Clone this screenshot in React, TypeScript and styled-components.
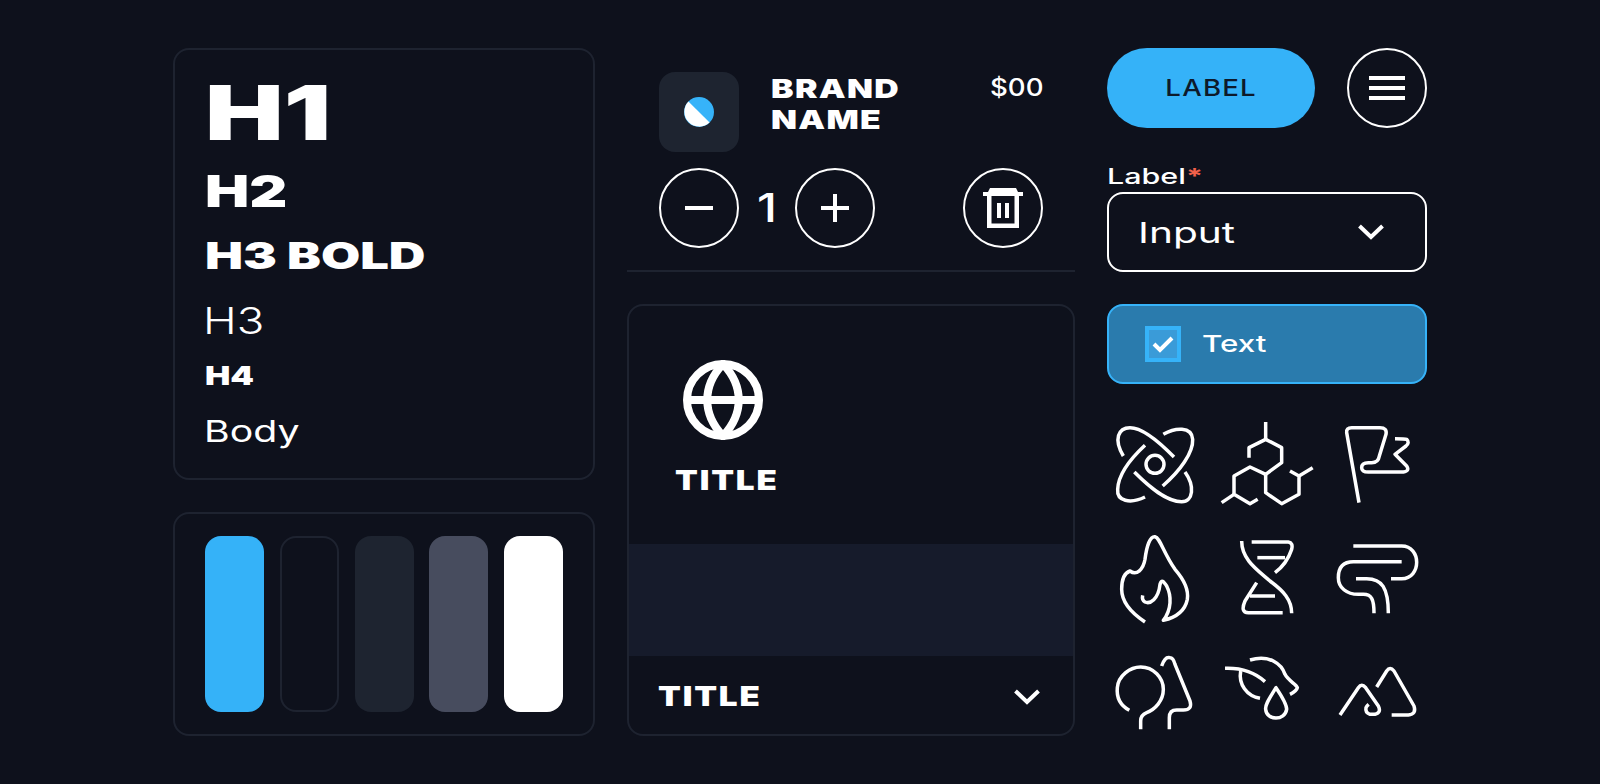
import styled, { createGlobalStyle, css } from "styled-components";

const GlobalStyle = createGlobalStyle`
  html, body {
    margin: 0;
    padding: 0;
    background: #0e111c;
    color: #fff;
    font-family: Inter, "Liberation Sans", sans-serif;
  }
`;

// no wide grotesque is installed, so text gets stretched sideways
const wide = (sx: number, origin = "left") => css`
  display: block;
  white-space: nowrap;
  transform: scaleX(${sx});
  transform-origin: ${origin} center;
`;

const Page = styled.div`
  display: grid;
  grid-template-columns: 422px 448px 320px;
  column-gap: 32px;
  width: 1254px;
  height: 784px;
  margin: 0 auto;
  padding-top: 48px;
  box-sizing: border-box;
`;

const Column = styled.div`
  display: flex;
  flex-direction: column;
  gap: 32px;
`;

const Panel = styled.section`
  border: 2px solid #1e2330;
  border-radius: 16px;
  box-sizing: border-box;
`;

const TypePanel = styled(Panel)`
  height: 432px;
  padding: 24px 0 0 30px;
`;

const H1 = styled.div`
  ${wide(1.38)}
  font-size: 76px;
  line-height: 76px;
  font-weight: 900;
`;
const H2 = styled.div`
  ${wide(1.34)}
  font-size: 44px;
  line-height: 44px;
  font-weight: 900;
  margin-top: 19px;
`;
const H3Bold = styled.div`
  ${wide(1.37)}
  font-size: 37px;
  line-height: 40px;
  font-weight: 900;
  margin-top: 23px;
`;
const H3 = styled.div`
  ${wide(1.23)}
  font-size: 37px;
  line-height: 40px;
  font-weight: 300;
  margin: 25px 0 0 -2px;
`;
const H4 = styled.div`
  ${wide(1.3)}
  font-size: 26px;
  line-height: 26px;
  font-weight: 900;
  margin-top: 22px;
`;
const Body = styled.div`
  ${wide(1.31)}
  font-size: 30px;
  line-height: 30px;
  font-weight: 400;
  margin: 27px 0 0 -1px;
`;

const PalettePanel = styled(Panel)`
  display: flex;
  justify-content: space-between;
  height: 224px;
  padding: 22px 30px;
`;

const Swatch = styled.div<{ $fill: string; $line?: string }>`
  width: 59px;
  border-radius: 16px;
  box-sizing: border-box;
  background: ${(p) => p.$fill};
  border: ${(p) => (p.$line ? `2px solid ${p.$line}` : "none")};
`;

const Cart = styled.div`
  height: 224px;
  padding: 24px 32px 0;
  box-sizing: border-box;
  border-bottom: 2px solid #1e2330;
`;

const CartRow = styled.div`
  display: flex;
  align-items: flex-start;
  margin-bottom: 16px;
`;

const Thumb = styled.div`
  display: flex;
  align-items: center;
  justify-content: center;
  width: 80px;
  height: 80px;
  border-radius: 16px;
  background: #1e2430;
`;

const BrandName = styled.div`
  ${wide(1.3)}
  margin: 1px 0 0 32px;
  font-size: 26px;
  line-height: 31px;
  font-weight: 900;
  letter-spacing: 1px;
`;

const Price = styled.div`
  ${wide(1.15, "right")}
  margin: 0 0 0 auto;
  font-size: 24px;
  line-height: 31px;
  font-weight: 500;
`;

const RoundButton = styled.button<{ $push?: boolean }>`
  display: flex;
  align-items: center;
  justify-content: center;
  flex: none;
  width: 80px;
  height: 80px;
  padding: 0;
  margin-left: ${(p) => (p.$push ? "auto" : "0")};
  background: transparent;
  color: #fff;
  border: 2px solid #fff;
  border-radius: 50%;
`;

const Quantity = styled.div`
  width: 56px;
  text-align: center;
  font-size: 40px;
  line-height: 80px;
  font-weight: 500;
  transform: scaleX(1.2);
`;

const InfoCard = styled(Panel)`
  display: flex;
  flex-direction: column;
  height: 432px;
  overflow: hidden;
`;

const Feature = styled.div`
  display: flex;
  flex-direction: column;
  align-items: flex-start;
  height: 238px;
  padding: 54px 0 0 46px;
  box-sizing: border-box;
`;

const GlobeSlot = styled.div`
  margin-left: 8px;
`;

const Title = styled.div`
  ${wide(1.23)}
  font-size: 27px;
  line-height: 30px;
  font-weight: 900;
  letter-spacing: 1.5px;
`;

const FeatureTitle = styled(Title)`
  margin-top: 26px;
`;

const Band = styled.div`
  height: 112px;
  background: #161b2b;
`;

const Accordion = styled.div`
  display: flex;
  flex: 1;
  align-items: center;
  justify-content: space-between;
  padding: 3px 33px 0 29px;
`;

const TopRow = styled.div`
  display: flex;
  justify-content: space-between;
`;

const PrimaryButton = styled.button`
  width: 208px;
  height: 80px;
  padding: 0;
  border: 0;
  border-radius: 40px;
  background: #35b2f8;
  color: #0d1a2b;
  font-family: inherit;
  font-size: 23px;
  font-weight: 500;
  letter-spacing: 1px;
`;

const ButtonText = styled.span`
  display: inline-block;
  transform: scaleX(1.2);
`;

const Field = styled.div`
  margin-top: 32px;
`;

const FieldLabel = styled.div`
  ${wide(1.45)}
  height: 32px;
  font-size: 21px;
  line-height: 34px;
  font-weight: 500;
`;

const Required = styled.span`
  color: #f0604a;
  font-weight: 700;
`;

const Select = styled.div`
  display: flex;
  align-items: center;
  justify-content: space-between;
  height: 80px;
  padding: 0 41px 0 29px;
  box-sizing: border-box;
  border: 2px solid #fff;
  border-radius: 16px;
`;

const SelectValue = styled.span`
  ${wide(1.4)}
  font-size: 29px;
  font-weight: 400;
`;

const CheckRow = styled.div`
  display: flex;
  align-items: center;
  height: 80px;
  margin-top: 32px;
  padding-left: 36px;
  box-sizing: border-box;
  background: #2a7bad;
  border: 2px solid #36b3f9;
  border-radius: 16px;
`;

const CheckBox = styled.div`
  display: flex;
  align-items: center;
  justify-content: center;
  width: 36px;
  height: 36px;
  box-sizing: border-box;
  border: 4px solid #36b3f9;
  background: #3a9bd8;
`;

const CheckText = styled.span`
  ${wide(1.36)}
  margin-left: 21px;
  font-size: 23px;
  font-weight: 500;
`;

const IconGrid = styled.div`
  display: grid;
  grid-template-columns: repeat(3, 96px);
  grid-auto-rows: 96px;
  column-gap: 16px;
  row-gap: 19px;
  margin-top: 31px;
`;

const LineIcon = styled.svg`
  display: block;
  width: 96px;
  height: 96px;
  fill: none;
  stroke: #fff;
  stroke-width: 10.5;
  stroke-linecap: butt;
  stroke-linejoin: round;
`;

const Chevron = () => (
  <svg width="26" height="16" viewBox="0 0 26 16" fill="none" stroke="#fff" strokeWidth="4">
    <path d="M1.5 2 L13 13 L24.5 2" />
  </svg>
);

const Logo = () => (
  <svg width="30" height="30" viewBox="0 0 30 30">
    <circle cx="15" cy="15" r="15" fill="#36b3f9" />
    <path d="M4.4 4.4 L25.6 25.6 A15 15 0 0 1 4.4 4.4 Z" fill="#fff" />
  </svg>
);

const Minus = () => (
  <svg width="28" height="28" viewBox="0 0 28 28" fill="#fff">
    <rect x="0" y="12" width="28" height="4" />
  </svg>
);

const Plus = () => (
  <svg width="28" height="28" viewBox="0 0 28 28" fill="#fff">
    <rect x="0" y="12" width="28" height="4" />
    <rect x="12" y="0" width="4" height="28" />
  </svg>
);

const Trash = () => (
  <svg width="40" height="40" viewBox="0 0 40 40" fill="#fff">
    <path d="M7 0 H33 L35 4 H40 V8 H0 V4 H5 Z" />
    <path d="M4 8 H8.5 V35.5 H31.5 V8 H36 V40 H4 Z" />
    <rect x="14" y="15" width="4" height="15" />
    <rect x="22" y="15" width="4" height="15" />
  </svg>
);

const Burger = () => (
  <svg width="36" height="24" viewBox="0 0 36 24" fill="#fff">
    <rect y="0" width="36" height="4" />
    <rect y="10" width="36" height="4" />
    <rect y="20" width="36" height="4" />
  </svg>
);

const Globe = () => (
  <svg width="80" height="80" viewBox="0 0 80 80" fill="none" stroke="#fff" strokeWidth="8" display="block">
    <circle cx="40" cy="40" r="36" />
    <path d="M40 4 C19 26 19 54 40 76 C61 54 61 26 40 4 Z" />
    <path d="M4 40 H76" />
  </svg>
);

const Check = () => (
  <svg width="22" height="18" viewBox="0 0 22 18" fill="none" stroke="#fff" strokeWidth="4">
    <path d="M2 9 L8 15 L20 3" />
  </svg>
);

const swatches = [
  { fill: "#35b2f8" },
  { fill: "transparent", line: "#1e2330" },
  { fill: "#1e2430" },
  { fill: "#474c5e" },
  { fill: "#ffffff" },
];

// paths are traced at 3x, so each icon views a 288 unit square
const icons = [
  {
    box: "21 12 288 288",
    paths: [
      "M70 135 C40 85 55 50 90 50 C130 50 185 100 222 138",
      "M103 183 C150 230 200 272 245 272 C280 272 285 225 255 183",
      "M190 70 C225 50 275 45 278 85 C280 125 240 180 188 225",
      "M135 258 C90 280 50 270 53 235 C55 190 95 140 135 103",
      "M192 160 A27 27 0 1 1 138 160 A27 27 0 1 1 192 160 Z",
    ],
  },
  {
    box: "357 12 288 288",
    paths: [
      "M497 33 V85",
      "M447 140 V110 L497 85 L545 110 V155 L497 190",
      "M497 190 L450 168 L402 195 V250 L450 278 L473 265",
      "M402 250 L365 275",
      "M497 190 V245 L545 278 L597 250 V195 L570 180",
      "M597 195 L638 170",
    ],
  },
  {
    box: "693 12 288 288",
    paths: [
      "M777 275 L740 65 Q738 50 755 50 L840 50 Q862 50 858 70 L838 135 Q835 155 815 155 L805 155 Q785 155 785 170 Q785 183 805 183 L910 183 Q930 180 920 165 L885 130 L918 105 Q930 95 920 85 Q915 83 885 83",
    ],
  },
  {
    box: "21 12 288 288",
    paths: [
      "M135 288 C100 265 65 235 65 190 C65 160 75 140 90 135 C110 150 130 130 135 100 C140 60 150 30 165 32 C180 35 190 80 225 130 C260 170 265 200 262 220 C255 255 225 275 190 283 C215 250 215 210 200 180 C190 165 185 160 180 175 C175 220 150 235 135 228 Q125 222 128 208",
    ],
  },
  {
    box: "357 12 288 288",
    paths: [
      "M425 45 C425 100 470 130 510 165 C550 195 575 220 575 262",
      "M455 48 H565 Q580 50 575 70 C565 100 545 125 525 140",
      "M472 95 H555",
      "M470 170 L435 225 Q420 260 445 260 H548",
      "M450 210 H525",
    ],
  },
  {
    box: "693 12 288 288",
    paths: [
      "M760 60 H905 C965 60 965 158 905 158 H873",
      "M905 107 H760 C725 107 715 130 715 155 C715 185 740 205 775 205 H790 C815 205 822 220 822 262",
      "M768 158 H800 C845 158 865 185 865 262",
    ],
  },
  {
    box: "21 12 288 288",
    paths: [
      "M88 208 C55 190 50 160 52 140 C55 105 90 78 122 78 C160 78 190 110 190 145 C190 180 165 205 140 215 Q122 222 122 240 V265",
      "M185 75 Q195 45 210 50 Q220 50 225 70 L270 180 Q278 207 250 207 H230 Q208 207 208 230 V265",
    ],
  },
  {
    box: "357 12 288 288",
    paths: [
      "M375 82 C430 80 465 95 495 122",
      "M450 57 C510 40 545 70 555 100 C565 120 590 130 592 140 Q590 150 570 160",
      "M422 90 C415 130 440 165 480 172",
      "M528 140 C510 170 495 190 497 205 C500 240 555 240 560 205 C560 190 545 165 528 140 Z",
    ],
  },
  {
    box: "693 12 288 288",
    paths: [
      "M720 222 L775 140 Q785 125 797 140 L835 195 Q845 215 825 220 H810 Q795 215 798 200 Q800 195 806 190",
      "M830 138 L860 90 Q870 75 882 90 L942 195 Q950 220 925 222 H875",
    ],
  },
];

const App = () => {
  return (
    <>
      <GlobalStyle />
      <Page>
        <Column>
          <TypePanel>
            <H1>H1</H1>
            <H2>H2</H2>
            <H3Bold>H3 BOLD</H3Bold>
            <H3>H3</H3>
            <H4>H4</H4>
            <Body>Body</Body>
          </TypePanel>
          <PalettePanel>
            {swatches.map((s) => (
              <Swatch key={s.fill} $fill={s.fill} $line={s.line} />
            ))}
          </PalettePanel>
        </Column>

        <Column>
          <Cart>
            <CartRow>
              <Thumb>
                <Logo />
              </Thumb>
              <BrandName>
                BRAND
                <br />
                NAME
              </BrandName>
              <Price>$00</Price>
            </CartRow>
            <CartRow>
              <RoundButton>
                <Minus />
              </RoundButton>
              <Quantity>1</Quantity>
              <RoundButton>
                <Plus />
              </RoundButton>
              <RoundButton $push>
                <Trash />
              </RoundButton>
            </CartRow>
          </Cart>
          <InfoCard>
            <Feature>
              <GlobeSlot>
                <Globe />
              </GlobeSlot>
              <FeatureTitle>TITLE</FeatureTitle>
            </Feature>
            <Band />
            <Accordion>
              <Title>TITLE</Title>
              <Chevron />
            </Accordion>
          </InfoCard>
        </Column>

        <div>
          <TopRow>
            <PrimaryButton>
              <ButtonText>LABEL</ButtonText>
            </PrimaryButton>
            <RoundButton>
              <Burger />
            </RoundButton>
          </TopRow>
          <Field>
            <FieldLabel>
              Label<Required>*</Required>
            </FieldLabel>
            <Select>
              <SelectValue>Input</SelectValue>
              <Chevron />
            </Select>
          </Field>
          <CheckRow>
            <CheckBox>
              <Check />
            </CheckBox>
            <CheckText>Text</CheckText>
          </CheckRow>
          <IconGrid>
            {icons.map((icon, i) => (
              <LineIcon key={i} viewBox={icon.box}>
                {icon.paths.map((d) => (
                  <path key={d} d={d} />
                ))}
              </LineIcon>
            ))}
          </IconGrid>
        </div>
      </Page>
    </>
  );
};

export default App;
